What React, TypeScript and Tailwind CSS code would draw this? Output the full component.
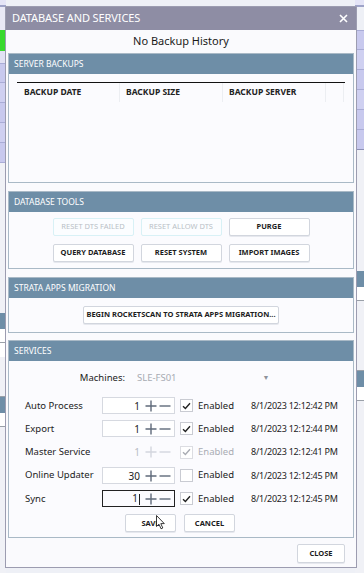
import React from 'react';

const font = { fontFamily: '"Noto Sans", "Open Sans", sans-serif' };

interface BtnProps {
  label: string;
  disabled?: boolean;
  className?: string;
}

const ToolButton = ({ label, disabled, className }: BtnProps) => (
  <div
    className={
      'h-[18px] flex items-center justify-center rounded-[2px] border text-[7.5px] ' +
      (disabled
        ? 'border-[#d8f1f6] bg-[#fbfdff] text-[#b9bfc6]'
        : 'border-[#d2d6de] bg-white font-bold text-[#1c1c1c] shadow-[0_1px_0_#e6e8ee]') +
      ' ' + (className ?? '')
    }
  >
    {label}
  </div>
);

const Section = ({ title, children, className }: { title: string; children: React.ReactNode; className?: string }) => (
  <div className={'border border-[#a9b9c6] bg-[#fbfbfe] flex flex-col ' + (className ?? '')}>
    <div className="h-[20px] bg-[#6e8ea7] text-white text-[8.5px] flex items-center pl-[5px] shrink-0">{title}</div>
    {children}
  </div>
);

const Check = ({ checked, disabled }: { checked: boolean; disabled?: boolean }) => (
  <div className={'w-[13px] h-[13px] border flex items-center justify-center bg-white ' + (disabled ? 'border-[#dcdde2]' : 'border-[#c9cbd2]')}>
    {checked && (
      <svg width="9" height="8" viewBox="0 0 9 8">
        <path d="M1 4.2 L3.4 6.5 L8 1.3" fill="none" stroke={disabled ? '#a9acb3' : '#222'} strokeWidth="1.4" />
      </svg>
    )}
  </div>
);

interface Svc {
  name: string;
  value: string;
  checked: boolean;
  date: string;
  disabled?: boolean;
  focused?: boolean;
}

const services: Svc[] = [
  { name: 'Auto Process', value: '1', checked: true, date: '8/1/2023 12:12:42 PM' },
  { name: 'Export', value: '1', checked: true, date: '8/1/2023 12:12:44 PM' },
  { name: 'Master Service', value: '1', checked: true, date: '8/1/2023 12:12:41 PM', disabled: true },
  { name: 'Online Updater', value: '30', checked: false, date: '8/1/2023 12:12:45 PM' },
  { name: 'Sync', value: '1', checked: true, date: '8/1/2023 12:12:45 PM', focused: true },
];

const Spinner = ({ s }: { s: Svc }) => {
  const c = s.disabled ? '#d3d6de' : '#5f6a7a';
  return (
    <div
      className={
        'w-[73px] h-[17px] flex items-center justify-end pr-[3px] ' +
        (s.disabled ? 'border border-transparent' : s.focused ? 'border border-[#222]' : 'border border-[#d6d9e0] bg-white')
      }
    >
      <span className={'text-[10px] leading-none mr-[5px] ' + (s.disabled ? 'text-[#b8bcc4]' : 'text-[#222]')}>
        {s.value}
        {s.focused && <span className="inline-block w-px h-[11px] bg-[#222] align-middle ml-[1px]" />}
      </span>
      <svg width="12" height="12" viewBox="0 0 12 12" className="mr-[2px]">
        <path d="M6 0.5 V11.5 M0.5 6 H11.5" stroke={c} strokeWidth="1.4" />
      </svg>
      <svg width="12" height="12" viewBox="0 0 12 12">
        <path d="M0.5 6 H11.5" stroke={c} strokeWidth="1.4" />
      </svg>
    </div>
  );
};

const Background = () => (
  <div className="w-[364px] h-[573px] bg-[#eef0f6] flex justify-between overflow-hidden">
    <div className="w-[6px] flex flex-col">
      <div className="h-[7px] border-b-[2px] border-[#9ea3c8] bg-[#e4e4f6]" />
      <div className="h-[23px] bg-[#e9e9f6]" />
      <div className="h-[21px] bg-[#39d92e]" />
      <div className="h-[12px] bg-[#e2e2f4]" />
      <div className="h-[20px] bg-[#c8c9ee] border-y border-[#a9acd6]" />
      <div className="h-[20px] bg-[#cfd0f1] border-b border-[#a9acd6]" />
      <div className="h-[20px] bg-[#c8c9ee] border-b border-[#a9acd6]" />
      <div className="h-[20px] bg-[#cfd0f1] border-b border-[#a9acd6]" />
      <div className="h-[20px] bg-[#c8c9ee] border-b border-[#a9acd6]" />
      <div className="h-[150px] bg-[#f0f1f6]" />
      <div className="h-[16px] bg-[#6e8ea7]" />
      <div className="h-[14px] bg-white border-b border-[#9aa0a8]" />
      <div className="h-[14px] bg-white" />
      <div className="h-[40px] bg-[#f0f1f6] border-b border-[#9aa0a8]" />
      <div className="h-[16px] bg-[#6e8ea7]" />
      <div className="h-[14px] bg-white border-b border-[#9aa0a8]" />
      <div className="flex-1 bg-[#f0f1f6]" />
    </div>
    <div className="w-[9px] flex flex-col">
      <div className="h-[7px] border-b-[2px] border-[#9ea3c8] bg-[#e4e4f6]" />
      <div className="h-[23px] bg-[#eef0f6]" />
      <div className="h-[20px] bg-[#c8c9ee] border-y border-[#a9acd6]" />
      <div className="h-[20px] bg-[#cfd0f1] border-b border-[#a9acd6]" />
      <div className="h-[20px] bg-[#c8c9ee] border-b border-[#a9acd6]" />
      <div className="h-[20px] bg-[#cfd0f1] border-b border-[#a9acd6]" />
      <div className="h-[20px] bg-[#c8c9ee] border-b border-[#a9acd6]" />
      <div className="h-[20px] bg-[#c8c9ee] border-b border-[#8c90b6]" />
      <div className="h-[121px] bg-[#f0f1f6]" />
      <div className="h-[16px] bg-[#6e8ea7]" />
      <div className="h-[14px] bg-white border-b border-[#9aa0a8]" />
      <div className="h-[70px] bg-[#f0f1f6] border-b border-[#9aa0a8]" />
      <div className="h-[16px] bg-[#6e8ea7]" />
      <div className="h-[14px] bg-white border-b border-[#9aa0a8]" />
      <div className="flex-1 bg-[#f0f1f6]" />
    </div>
  </div>
);

const App = () => {
  return (
    <div className="relative w-[364px] h-[573px] overflow-hidden" style={font}>
      <Background />

      <div className="absolute left-[5px] top-[6px] w-[352px] h-[562px] border border-[#9c9cb0] bg-[#fafafd] flex flex-col">
        <div className="h-[23px] bg-[#8e8da4] flex items-center justify-between pl-[6px] pr-[8px] shrink-0">
          <span className="text-white text-[11px] tracking-[-0.1px]">DATABASE AND SERVICES</span>
          <svg width="9" height="9" viewBox="0 0 9 9">
            <path d="M1 1 L8 8 M8 1 L1 8" stroke="#fff" strokeWidth="1.6" />
          </svg>
        </div>

        <div className="flex flex-col px-[2px]">
          <div className="h-[23px] flex items-center justify-center text-[11px] text-[#1a1a1a]">No Backup History</div>

          <div className="flex flex-col gap-[8px]">
            <Section title="SERVER BACKUPS" className="h-[130px]">
              <div className="mx-[8px] mt-[8px] border-t border-[#111]">
                <div className="grid grid-cols-[103px_103px_103px_18px_1fr] h-[19px] text-[8.5px] font-bold text-[#222]">
                  <div className="pl-[7px] flex items-center border-r border-[#eceef2]">BACKUP DATE</div>
                  <div className="pl-[6px] flex items-center border-r border-[#eceef2]">BACKUP SIZE</div>
                  <div className="pl-[6px] flex items-center border-r border-[#eceef2]">BACKUP SERVER</div>
                  <div className="border-r border-[#eceef2]" />
                  <div />
                </div>
              </div>
            </Section>

            <Section title="DATABASE TOOLS" className="h-[78px]">
              <div className="flex flex-col items-center gap-[8px] pt-[6px]">
                <div className="flex gap-[7px]">
                  <ToolButton label="RESET DTS FAILED" disabled className="w-[81px]" />
                  <ToolButton label="RESET ALLOW DTS" disabled className="w-[81px]" />
                  <ToolButton label="PURGE" className="w-[81px]" />
                </div>
                <div className="flex gap-[7px]">
                  <ToolButton label="QUERY DATABASE" className="w-[81px]" />
                  <ToolButton label="RESET SYSTEM" className="w-[81px]" />
                  <ToolButton label="IMPORT IMAGES" className="w-[81px]" />
                </div>
              </div>
            </Section>

            <Section title="STRATA APPS MIGRATION" className="h-[56px]">
              <div className="flex justify-center pt-[8px]">
                <ToolButton label="BEGIN ROCKETSCAN TO STRATA APPS MIGRATION..." className="w-[196px]" />
              </div>
            </Section>

            <Section title="SERVICES" className="h-[198px] -mt-[1px]">
              <div className="flex items-center h-[18px] mt-[8px] text-[9.5px]">
                <span className="w-[116px] text-right text-[#222]">Machines:</span>
                <span className="ml-[12px] text-[#a7abb3]">SLE-FS01</span>
                <span className="ml-[86px] text-[#8e929a] text-[7px]">▼</span>
              </div>
              <div className="flex flex-col mt-[7px] pl-[16px]">
                {services.map((s) => (
                  <div key={s.name} className="flex items-center h-[23.3px] text-[9.5px]">
                    <span className="w-[77px] text-[#222]">{s.name}</span>
                    <Spinner s={s} />
                    <div className="ml-[5px]">
                      <Check checked={s.checked} disabled={s.disabled} />
                    </div>
                    <span className={'ml-[5px] w-[53px] ' + (s.disabled ? 'text-[#a9acb3]' : 'text-[#222]')}>Enabled</span>
                    <span className="text-[#222] text-[9px] tracking-[-0.25px]">{s.date}</span>
                  </div>
                ))}
              </div>
              <div className="flex justify-center gap-[8px] mt-[4px] pr-[2px]">
                <ToolButton label="SAVE" className="w-[51px]" />
                <ToolButton label="CANCEL" className="w-[51px]" />
              </div>
            </Section>
          </div>

          <div className="flex justify-end pr-[9px] mt-[6px]">
            <ToolButton label="CLOSE" className="w-[48px] h-[19px]" />
          </div>
        </div>
      </div>

      <svg className="absolute left-[156px] top-[515px]" width="10" height="15" viewBox="0 0 10 15">
        <path d="M0.5 0.5 L0.5 11.5 L3 9.2 L5 13.8 L6.8 13 L4.8 8.6 L8.3 8.6 Z" fill="#fff" stroke="#222" strokeWidth="0.9" />
      </svg>
    </div>
  );
};

export default App;
